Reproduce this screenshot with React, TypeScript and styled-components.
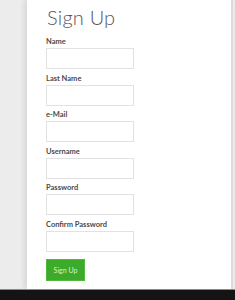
import React from "react";
import styled, { createGlobalStyle } from "styled-components";

const Global = createGlobalStyle`
  html, body { margin: 0; padding: 0; }
  body { background: #ececec; font-family: Lato, "Open Sans", sans-serif; }
`;

const Screen = styled.div`
  width: 235px;
  height: 300px;
  display: flex;
  flex-direction: column;
  overflow: hidden;
`;

const Main = styled.div`
  flex: 1;
  display: flex;
  background: #ececec;
`;

const Gutter = styled.div`
  width: 27px;
  flex: none;
`;

const Panel = styled.div`
  width: 206px;
  flex: none;
  background: #fff;
  border-right: 2px solid #dcdcdc;
  box-shadow: -3px 0 5px rgba(0, 0, 0, 0.09);
  padding: 5px 0 0 19px;
  box-sizing: border-box;
`;

const Footer = styled.div`
  height: 10px;
  flex: none;
  background: #141414;
  border-top: 1px solid #8a8a8a;
`;

const Title = styled.h1`
  margin: 0 0 8px 1px;
  font-family: Lato, sans-serif;
  font-weight: 300;
  font-size: 20px;
  line-height: 24px;
  color: #555;
  letter-spacing: 0.2px;
`;

const Form = styled.form`
  display: flex;
  flex-direction: column;
  gap: 4.6px;
`;

const Field = styled.div`
  display: flex;
  flex-direction: column;
`;

const Label = styled.label`
  font-family: Lato, sans-serif;
  font-weight: 700;
  font-size: 7.5px;
  line-height: 9px;
  color: #4a4a4a;
  margin-bottom: 2px;
`;

const Input = styled.input`
  width: 88px;
  height: 21px;
  box-sizing: border-box;
  border: 1px solid #e2e2e2;
  background: #fff;
  padding: 0 4px;
  margin: 0;
  outline: none;
`;

const Button = styled.button`
  margin-top: 0px;
  width: 39px;
  height: 22px;
  box-sizing: border-box;
  background: #3cab2a;
  border: 1px solid #52b841;
  color: #d9f0d2;
  font-family: Lato, sans-serif;
  font-size: 7px;
  padding: 0;
  cursor: pointer;
`;

const fields = ["Name", "Last Name", "e-Mail", "Username", "Password", "Confirm Password"];

export default function App() {
  return (
    <>
      <Global />
      <Screen>
        <Main>
          <Gutter />
          <Panel>
            <Title>Sign Up</Title>
            <Form onSubmit={(e) => e.preventDefault()}>
              {fields.map((f) => (
                <Field key={f}>
                  <Label>{f}</Label>
                  <Input type={f.includes("Password") ? "password" : "text"} />
                </Field>
              ))}
              <div>
                <Button type="submit">Sign Up</Button>
              </div>
            </Form>
          </Panel>
        </Main>
        <Footer />
      </Screen>
    </>
  );
}
